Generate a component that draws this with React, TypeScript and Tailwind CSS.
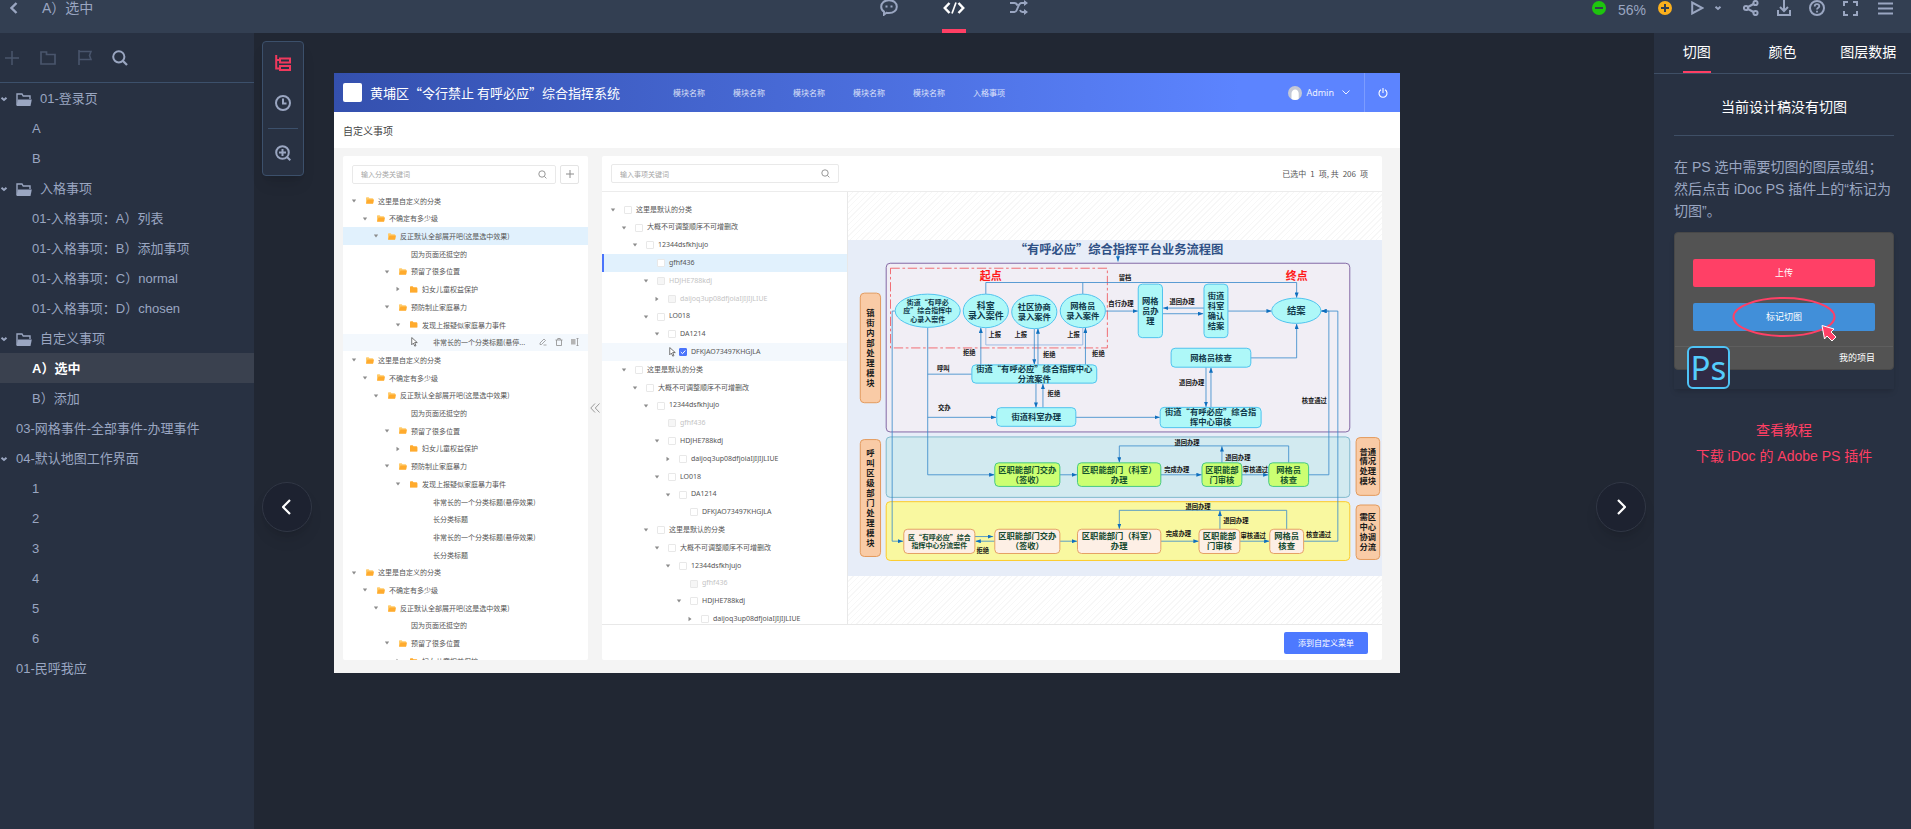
import type { ReactNode } from "react";

type IconProps = { className?: string; children: ReactNode; box?: string };

function Icon({ className = "", children, box = "0 0 16 16" }: IconProps) {
  return (
    <svg viewBox={box} className={`shrink-0 ${className}`} fill="none" stroke="currentColor" strokeWidth={2} aria-hidden="true">
      {children}
    </svg>
  );
}

/* ---------- top bar ---------- */

function TopBar() {
  return (
    <header className="flex h-[33px] shrink-0 items-start bg-[#333f52] text-[#9aa6c1]">
      <div className="flex h-4 flex-1 items-center pl-[10px] text-sm">
        <button type="button" aria-label="返回" className="mr-6 flex">
          <Icon className="h-3 w-2" box="0 0 8 12"><path d="M6.5 1 1.500 6l5 5" strokeWidth={2.4} /></Icon>
        </button>
        <span>A）选中</span>
      </div>
      <nav className="ml-1 flex h-full items-start gap-[41px]">
        <button type="button" aria-label="评论" className="flex h-full w-6 justify-center">
          <Icon className="-mt-px h-[17px] w-[18px]" box="0 0 18 17">
            <path d="M9 1.2c4.500 0 7.800 2.800 7.800 6.500S13.500 14 9 14c-.9 0-1.800 0-2.600-.2L4 15.700v-3C2.200 11.500 1.200 9.800 1.200 7.700 1.200 4 4.500 1.200 9 1.200z" />
            <path d="M5.500 6.500h2v2h-2zM10.500 6.500h2v2h-2z" fill="currentColor" stroke="none" />
          </Icon>
        </button>
        <button type="button" aria-label="标注" className="flex h-full w-6 flex-col items-center justify-between border-b-4 border-[#ff3f64] text-white">
          <Icon className="mt-[2px] h-3 w-[22px]" box="0 0 22 12">
            <path d="M6.500 1 1.800 6l4.700 5M15.500 1l4.700 5-4.700 5" strokeWidth={2.500} />
            <path d="M13 .5 9 11.500" strokeWidth={1.700} />
          </Icon>
        </button>
        <button type="button" aria-label="流程" className="flex h-full w-6 justify-center">
          <Icon className="h-[15px] w-[18px]" box="0 0 18 15">
            <path d="M0 3h4.500c1.500 0 2.200.8 3 2.500M0 12h4.500c3.500 0 3-9 7-9H15M10 10c.5 1.300 1 2 2.300 2H15" />
            <path d="M14 0v6l4-3zM14 9v6l4-3z" fill="currentColor" stroke="none" />
          </Icon>
        </button>
      </nav>
      <div className="flex h-4 flex-1 items-center justify-end pr-[18px]">
        <button type="button" aria-label="缩小" className="mr-3 flex h-[14px] w-[14px] items-center justify-center rounded-full bg-[#1ec40e] text-[#333f52]">
          <Icon className="h-2 w-2" box="0 0 8 8"><path d="M0 4h8" /></Icon>
        </button>
        <span className="mr-3 w-7 pt-1 text-sm leading-4">56%</span>
        <button type="button" aria-label="放大" className="mr-[19px] flex h-[14px] w-[14px] items-center justify-center rounded-full bg-[#fbb01d] text-[#333f52]">
          <Icon className="h-2 w-2" box="0 0 8 8"><path d="M0 4h8M4 0v8" /></Icon>
        </button>
        <button type="button" aria-label="播放" className="mr-[10px] flex">
          <Icon className="h-[14px] w-[13px]" box="0 0 13 14"><path d="M1.200 1.500v11L11.500 7z" /></Icon>
        </button>
        <button type="button" aria-label="播放选项" className="mr-[21px] flex">
          <Icon className="h-[5px] w-2" box="0 0 8 5"><path d="m1.500.8 2.500 2.200L6.500.8" /></Icon>
        </button>
        <button type="button" aria-label="分享" className="mr-[18px] flex">
          <Icon className="h-4 w-4">
            <circle cx="3" cy="8" r="2.100" /><circle cx="12.500" cy="3" r="2.100" /><circle cx="12.500" cy="13" r="2.100" />
            <path d="m5 7 5.500-3M5 9l5.500 3" />
          </Icon>
        </button>
        <button type="button" aria-label="下载" className="mr-[18px] flex">
          <Icon className="h-4 w-[14px]" box="0 0 14 16"><path d="M1 10v5h12v-5M7 0v10.500M3 7l4 4 4-4" /></Icon>
        </button>
        <button type="button" aria-label="帮助" className="mr-[18px] flex">
          <Icon className="h-4 w-4">
            <circle cx="8" cy="8" r="7" />
            <path d="M5.700 6.500C5.700 5 6.600 4.200 8 4.200s2.300.8 2.300 2C10.300 7.700 8 7.800 8 9.500M8 10.700v1.800" strokeWidth={1.800} />
          </Icon>
        </button>
        <button type="button" aria-label="全屏" className="mr-5 flex">
          <Icon className="h-[15px] w-[15px]" box="0 0 15 15"><path d="M1 5V1h4M10 1h4v4M14 10v4h-4M5 14H1v-4" /></Icon>
        </button>
        <button type="button" aria-label="菜单" className="flex">
          <Icon className="h-[13px] w-[15px]" box="0 0 15 13"><path d="M0 1.500h15M0 6.500h15M0 11.500h15" /></Icon>
        </button>
      </div>
    </header>
  );
}

/* ---------- page list ---------- */

type PageRow = { label: string; kind: "folder" | "open" | "root" | "child"; active?: boolean };

const pages: PageRow[] = [
  { label: "01-登录页", kind: "folder" },
  { label: "A", kind: "child" },
  { label: "B", kind: "child" },
  { label: "入格事项", kind: "folder" },
  { label: "01-入格事项：A）列表", kind: "child" },
  { label: "01-入格事项：B）添加事项", kind: "child" },
  { label: "01-入格事项：C）normal", kind: "child" },
  { label: "01-入格事项：D）chosen", kind: "child" },
  { label: "自定义事项", kind: "folder" },
  { label: "A）选中", kind: "child", active: true },
  { label: "B）添加", kind: "child" },
  { label: "03-网格事件-全部事件-办理事件", kind: "root" },
  { label: "04-默认地图工作界面", kind: "open" },
  { label: "1", kind: "child" },
  { label: "2", kind: "child" },
  { label: "3", kind: "child" },
  { label: "4", kind: "child" },
  { label: "5", kind: "child" },
  { label: "6", kind: "child" },
  { label: "01-民呼我应", kind: "root" },
];

function Sidebar() {
  return (
    <aside className="w-[254px] shrink-0 bg-[#283142] text-[13px] text-[#9aa6c1]">
      <div className="flex h-[50px] items-center border-b border-[#3c506b] pl-[5px] text-[#49556c]">
        <button type="button" aria-label="新建" className="mr-[21px] flex">
          <Icon className="h-[14px] w-[14px]" box="0 0 14 14"><path d="M0 7h14M7 0v14" strokeWidth={1.500} /></Icon>
        </button>
        <button type="button" aria-label="新建文件夹" className="mr-[22px] flex">
          <Icon className="h-[14px] w-4" box="0 0 16 14"><path d="M1 1h5.500v2.500H15V13H1z" strokeWidth={1.700} /></Icon>
        </button>
        <button type="button" aria-label="标记" className="mr-5 flex">
          <Icon className="h-[15px] w-[14px]" box="0 0 14 15"><path d="M1 0v15M1 1.500h12L11.500 5.500 13 9.500H1" strokeWidth={1.600} /></Icon>
        </button>
        <button type="button" aria-label="搜索" className="flex text-[#9aa6c1]">
          <Icon className="h-4 w-4"><circle cx="6.800" cy="6.800" r="5.600" /><path d="m11 11 4 4" strokeWidth={2.300} /></Icon>
        </button>
      </div>
      <ul>
        {pages.map((p, i) => (
          <li key={i} className={p.active ? "bg-[#3a414f] font-bold text-white" : ""}>
            <a href="#" className="flex h-[30px] items-center pt-[2px]">
              <span className="flex w-4 shrink-0">
                {(p.kind === "folder" || p.kind === "open") && (
                  <Icon className="h-[5px] w-2" box="0 0 8 5"><path d="m1.500.8 2.500 2.200L6.500.8" /></Icon>
                )}
              </span>
              {p.kind === "folder" && (
                <Icon className="mr-2 h-[13px] w-4" box="0 0 16 13">
                  <path d="M1 12V1h5l1.200 2H14v3" strokeWidth={1.400} />
                  <path d="M1.800 6.500h14L14.500 13H.5z" fill="currentColor" stroke="none" />
                </Icon>
              )}
              <span className={p.kind === "child" ? "pl-4" : ""}>{p.label}</span>
            </a>
          </li>
        ))}
      </ul>
    </aside>
  );
}

/* ---------- design canvas: trees ---------- */

type Node = { level: number; label: string; arrow?: "down" | "right"; folder?: "open" | "closed"; state?: "selected" | "hover"; disabled?: boolean };

const categoryBlock = (leaves: Node[], selected: boolean): Node[] => [
  { level: 0, label: "这里是自定义的分类", arrow: "down", folder: "open" },
  { level: 1, label: "不确定有多少级", arrow: "down", folder: "open" },
  { level: 2, label: "反正默认全部展开吧(这是选中效果)", arrow: "down", folder: "open", state: selected ? "selected" : undefined },
  { level: 3, label: "因为页面还挺空的" },
  { level: 3, label: "预留了很多位置", arrow: "down", folder: "open" },
  { level: 4, label: "妇女儿童权益保护", arrow: "right", folder: "closed" },
  { level: 3, label: "预防制止家庭暴力", arrow: "down", folder: "open" },
  { level: 4, label: "发现上报疑似家庭暴力事件", arrow: "down", folder: "closed" },
  ...leaves,
];

const categories: Node[] = [
  ...categoryBlock([{ level: 5, label: "非常长的一个分类标题(悬停...", state: "hover" }], true),
  ...categoryBlock(
    [
      { level: 5, label: "非常长的一个分类标题(悬停效果)" },
      { level: 5, label: "长分类标题" },
      { level: 5, label: "非常长的一个分类标题(悬停效果)" },
      { level: 5, label: "长分类标题" },
    ],
    false,
  ),
  ...categoryBlock([], false).slice(0, 6),
];

const itemBlock = (base: number, first: boolean): Node[] => {
  const inner = base + 3;
  return [
    { level: base, label: "这里是默认的分类", arrow: "down" },
    { level: base + 1, label: "大概不可调整顺序不可增删改", arrow: "down" },
    { level: base + 2, label: "12344dsfkhjujo", arrow: "down" },
    { level: inner, label: "gfhf436", state: first ? "selected" : undefined, disabled: !first },
    { level: inner, label: "HDJHE788kdj", arrow: "down", disabled: first },
    { level: inner + 1, label: "daijoq3up08dfjoiaIJIJIJLIUE", arrow: "right", disabled: first },
    { level: inner, label: "LO018", arrow: "down" },
    { level: inner + 1, label: "DA1214", arrow: "down" },
    { level: inner + 2, label: "DFKJAO73497KHGJLA", state: first ? "hover" : undefined },
  ];
};

const items: Node[] = [...itemBlock(0, true), ...itemBlock(1, false), ...itemBlock(3, false).slice(0, 6)];

const INDENT = 11;

function Arrow({ dir }: { dir?: "down" | "right" }) {
  return (
    <svg viewBox="0 0 6 6" className="h-[6px] w-[6px] shrink-0 text-[#8c8c8c]" fill="currentColor" aria-hidden="true">
      {dir === "down" && <path d="M.8 1.500h4.400L3 4.500z" />}
      {dir === "right" && <path d="M1.500.8v4.400l3-2.200z" />}
    </svg>
  );
}

function Pointer() {
  return (
    <svg viewBox="0 0 12 18" className="h-[10px] w-[7px]" fill="#fff" stroke="#444" strokeWidth={1.300} aria-hidden="true">
      <path d="M1 1v13l3-3 2.500 5.500 2.200-1L6.300 10H11z" />
    </svg>
  );
}

function Magnifier() {
  return (
    <svg viewBox="0 0 9 9" className="h-[9px] w-[9px] shrink-0 text-[#8c8c8c]" fill="none" stroke="currentColor" aria-hidden="true">
      <circle cx="4" cy="4" r="3.200" strokeWidth={0.900} />
      <path d="m6.400 6.400 2 2" strokeWidth={0.900} />
    </svg>
  );
}

function SearchBox({ label }: { label: string }) {
  return (
    <label className="flex h-[19px] min-w-0 flex-1 items-center rounded-xs border border-[#e9e9e9] pr-2 pl-2">
      <input aria-label={label} placeholder={label} className="h-full min-w-0 flex-1 bg-transparent text-[7px] outline-none placeholder:text-[#a6a6a6]" />
      <Magnifier />
    </label>
  );
}

function rowTone(state?: "selected" | "hover") {
  if (state === "selected") return "bg-[#e1f1fd]";
  if (state === "hover") return "bg-[#f3f8fd]";
  return "";
}

function CategoryTree() {
  return (
    <section className="flex w-[245px] shrink-0 flex-col overflow-hidden rounded-xs bg-white">
      <div className="flex h-9 shrink-0 items-center gap-1 px-[9px]">
        <SearchBox label="输入分类关键词" />
        <button type="button" aria-label="新增分类" className="flex h-[19px] w-[19px] items-center justify-center rounded-xs border border-[#e4e4e4] text-[#8c8c8c]">
          <svg viewBox="0 0 8 8" className="h-2 w-2" stroke="currentColor" aria-hidden="true"><path d="M0 4h8M4 0v8" /></svg>
        </button>
      </div>
      <ul className="flex h-[478px] shrink-0 flex-col">
        {categories.map((n, i) => (
          <li key={i} className={`relative flex flex-1 items-center pr-[9px] ${rowTone(n.state)}`} style={{ paddingLeft: 8 + n.level * INDENT }}>
            <Arrow dir={n.arrow} />
            <span className="mr-1 ml-[9px] flex h-2 w-2 items-center">
              {n.folder && (
                <svg viewBox="0 0 16 13" className="h-[7px] w-2" aria-hidden="true">
                  <path d="M0 1.500C0 .7.600 0 1.400 0h4l1.500 2H13c.8 0 1.500.7 1.500 1.500V12H0z" fill={n.folder === "open" ? "#ffcb6b" : "#ffab2e"} />
                  <path d={n.folder === "open" ? "M3 4.500h13L14 13H0z" : "M0 4h14.500v8.500H0z"} fill="#ffab2e" />
                </svg>
              )}
            </span>
            <span className="whitespace-nowrap">{n.label}</span>
            {n.state === "hover" && (
              <>
                <span className="absolute left-[68px]"><Pointer /></span>
                <span className="ml-auto flex items-center gap-2 text-[#8c8c8c]">
                  <button type="button" aria-label="编辑" className="flex">
                    <Icon className="h-2 w-2"><path d="M2 10 10 2l3 3-8 8H2zM9 14h6" strokeWidth={1.500} /></Icon>
                  </button>
                  <button type="button" aria-label="删除" className="flex">
                    <Icon className="h-2 w-2"><path d="M1 4h14M3 4v11h10V4M5.500 4V1h5v3" strokeWidth={1.600} /></Icon>
                  </button>
                  <button type="button" aria-label="移动" className="flex">
                    <Icon className="h-2 w-2"><path d="M0 2h9v11H0z" fill="#b5b5b5" stroke="none" /><path d="M11 1h4M11 15h4M13 1v14" strokeWidth={1.500} /></Icon>
                  </button>
                </span>
              </>
            )}
          </li>
        ))}
      </ul>
    </section>
  );
}

function ItemTree() {
  return (
    <div className="w-[246px] shrink-0 overflow-hidden border-r border-[#e8e8e8] pt-[9px] font-['Noto_Sans','Noto_Sans_CJK_SC',sans-serif]">
      <ul className="flex h-[427px] flex-col">
        {items.map((n, i) => (
          <li
            key={i}
            className={`relative flex flex-1 items-center ${rowTone(n.state)} ${n.disabled ? "text-[#c4c4c4]" : ""}`}
            style={{ paddingLeft: 8 + n.level * INDENT }}
          >
            {n.state === "selected" && <span className="absolute inset-y-0 left-0 w-[2px] bg-[#4a74fb]" />}
            {n.state === "hover" && <span className="absolute left-[67px] z-10"><Pointer /></span>}
            <Arrow dir={n.arrow} />
            <label className="ml-2 flex items-center gap-1 whitespace-nowrap">
              <span className="relative flex h-2 w-2">
                <input
                  type="checkbox"
                  defaultChecked={n.state === "hover"}
                  disabled={n.disabled}
                  className="h-2 w-2 appearance-none rounded-[1px] border border-[#e8e8e8] bg-white checked:border-[#4a74fb] checked:bg-[#4a74fb] disabled:bg-[#f6f6f6]"
                />
                {n.state === "hover" && (
                  <svg viewBox="0 0 8 8" className="pointer-events-none absolute inset-0 h-2 w-2" fill="none" stroke="#fff" aria-hidden="true"><path d="m1.800 4 1.700 1.700 2.800-3.200" /></svg>
                )}
              </span>
              {n.label}
            </label>
          </li>
        ))}
      </ul>
    </div>
  );
}

/* ---------- design canvas: flow chart ---------- */

type Shape = { x: number; y: number; w: number; h: number; lines: string[]; size?: number; tone: keyof typeof tones; gap?: number; round?: boolean };

const tones = {
  cyan: { fill: "#aef8f8", stroke: "#4fc3ee", text: "#10384a" },
  green: { fill: "#ccff72", stroke: "#45c888", text: "#14532d" },
  pink: { fill: "#fdefe5", stroke: "#e5a164", text: "#14492f" },
  orange: { fill: "#f9cba6", stroke: "#e39a5c", text: "#1b1b1b" },
};

const shapes: Shape[] = [
  { x: 58, y: 157, w: 61, h: 330, lines: [..."镇街内部处理模块"], tone: "orange" },
  { x: 58, y: 598, w: 61, h: 352, lines: [..."呼叫区级部门处理模块"], tone: "orange" },
  { x: 1551, y: 592, w: 71, h: 174, lines: ["普通", "情况", "处理", "模块"], tone: "orange" },
  { x: 1551, y: 795, w: 71, h: 164, lines: ["需区", "中心", "协调", "分流"], tone: "orange" },
  { x: 163, y: 160, w: 196, h: 100, lines: ["街道“有呼必", "应”综合指挥中", "心录入案件"], size: 21, gap: 25, tone: "cyan", round: true },
  { x: 368, y: 160, w: 136, h: 101, lines: ["科室", "录入案件"], size: 27, tone: "cyan", round: true },
  { x: 514, y: 163, w: 136, h: 101, lines: ["社区协商", "录入案件"], tone: "cyan", round: true },
  { x: 660, y: 160, w: 136, h: 101, lines: ["网格员", "录入案件"], tone: "cyan", round: true },
  { x: 1297, y: 172, w: 148, h: 76, lines: ["结案"], size: 28, tone: "cyan", round: true },
  { x: 895, y: 130, w: 73, h: 161, lines: ["网格", "员办", "理"], tone: "cyan" },
  { x: 1093, y: 130, w: 72, h: 161, lines: ["街道", "科室", "确认", "结案"], tone: "cyan" },
  { x: 994, y: 323, w: 240, h: 57, lines: ["网格员核查"], tone: "cyan" },
  { x: 394, y: 373, w: 376, h: 55, lines: ["街道“有呼必应”综合指挥中心", "分流案件"], tone: "cyan" },
  { x: 469, y: 502, w: 238, h: 56, lines: ["街道科室办理"], tone: "cyan" },
  { x: 961, y: 501, w: 304, h: 61, lines: ["街道“有呼必应”综合指", "挥中心审核"], tone: "cyan" },
  { x: 463, y: 668, w: 196, h: 71, lines: ["区职能部门交办", "（签收）"], tone: "green" },
  { x: 712, y: 668, w: 251, h: 71, lines: ["区职能部门（科室）", "办理"], tone: "green" },
  { x: 1087, y: 668, w: 120, h: 71, lines: ["区职能部", "门审核"], tone: "green" },
  { x: 1288, y: 668, w: 120, h: 71, lines: ["网格员", "核查"], tone: "green" },
  { x: 189, y: 868, w: 214, h: 73, lines: ["区“有呼必应”综合", "指挥中心分流案件"], size: 21, gap: 26, tone: "pink" },
  { x: 463, y: 868, w: 196, h: 73, lines: ["区职能部门交办", "（签收）"], tone: "pink" },
  { x: 712, y: 868, w: 251, h: 73, lines: ["区职能部门（科室）", "办理"], tone: "pink" },
  { x: 1078, y: 868, w: 123, h: 73, lines: ["区职能部", "门审核"], tone: "pink" },
  { x: 1291, y: 868, w: 102, h: 73, lines: ["网格员", "核查"], tone: "pink" },
];

const arrows = [
  "M834 40V62", "M436 160V125H1372V171", "M796 211H894", "M1093 202H970", "M968 219H1091", "M1165 211H1297",
  "M1234 352H1372V249", "M1408 704H1469V211H1446", "M1393 904H1496V211H1446", "M261 260V704H462", "M261 531H467",
  "M162 211H154V904H187", "M421 373V261", "M582 263V372", "M593 373V263", "M736 373V261", "M587 428V502",
  "M608 502V430", "M707 531H960", "M1099 380V500", "M1114 500V381", "M659 704H711", "M963 704H1086", "M1207 704H1287",
  "M1147 668V618", "M1348 668V617H838V667", "M403 890H458", "M463 904H405", "M659 904H711", "M963 904H1077",
  "M1201 904H1290", "M1141 868V812", "M1342 868V811H838V867",
];

const notes: [number, number, string][] = [
  [855, 111, "留档"], [843, 188, "自行办理"], [1027, 182, "退回办理"], [463, 283, "上报"], [541, 283, "上报"], [700, 283, "上报"],
  [386, 337, "拒绝"], [627, 342, "拒绝"], [775, 338, "拒绝"], [308, 384, "呼叫"], [311, 503, "交办"], [641, 461, "拒绝"],
  [1056, 428, "退回办理"], [1425, 480, "核查通过"], [1042, 607, "退回办理"], [1195, 652, "退回办理"], [1011, 688, "完成办理"],
  [1248, 688, "审核通过"], [1075, 799, "退回办理"], [1189, 843, "退回办理"], [1016, 882, "完成办理"], [1241, 887, "审核通过"],
  [1438, 883, "核查通过"], [427, 932, "拒绝"],
];

function FlowChart() {
  return (
    <svg viewBox="21 -3 1608 1014" className="h-auto w-full bg-[#e7edf8]" textAnchor="middle" role="img" aria-label="综合指挥平台业务流程图">
      <defs>
        <marker id="tip" viewBox="0 0 10 10" refX="10" refY="5" markerWidth="16" markerHeight="12" markerUnits="userSpaceOnUse" orient="auto" preserveAspectRatio="none">
          <path d="M0 0 10 5 0 10z" fill="#0f6fbe" />
        </marker>
      </defs>
      <text x="837" y="39" fontSize="37" fontWeight="700" fill="#2f5186">“有呼必应”综合指挥平台业务流程图</text>
      <g strokeWidth="3">
        <rect x="136" y="67" width="1396" height="508" rx="12" fill="#f1eef5" stroke="#8468a5" />
        <rect x="136" y="590" width="1396" height="182" rx="12" fill="#d2eaf0" stroke="#7fb9cd" />
        <rect x="136" y="785" width="1396" height="177" rx="12" fill="#f9f8a0" stroke="#fccb2a" />
      </g>
      <rect x="149" y="82" width="653" height="240" fill="none" stroke="#f0535a" strokeWidth="2.500" strokeDasharray="28 8 8 8" />
      <path d="M436 260V313H728V260" fill="none" stroke="#8fb2e0" strokeWidth="2.500" />
      <g fill="none" stroke="#3a8bcb" strokeWidth="2.500">
        <path d="M728 125V160M394 401H261" />
        {arrows.map((d) => <path key={d} d={d} markerEnd="url(#tip)" />)}
      </g>
      {shapes.map((s, i) => {
        const t = tones[s.tone];
        const size = s.size ?? 25;
        const gap = s.gap ?? 30;
        const cx = s.x + s.w / 2;
        const top = s.y + s.h / 2 - ((s.lines.length - 1) * gap) / 2 + size * 0.36;
        return (
          <g key={i}>
            <rect x={s.x} y={s.y} width={s.w} height={s.h} rx={s.round ? s.w / 2 : 12} ry={s.round ? s.h / 2 : 12} fill={t.fill} stroke={t.stroke} strokeWidth="3" />
            <g fontSize={size} fontWeight="700" fill={t.text}>
              {s.lines.map((l, k) => <text key={k} x={cx} y={top + k * gap}>{l}</text>)}
            </g>
          </g>
        );
      })}
      <g fontSize="19" fontWeight="700" fill="#151515">
        {notes.map(([x, y, t], i) => <text key={i} x={x} y={y + 7}>{t}</text>)}
      </g>
      <g fontSize="33" fontWeight="700" fill="#ff1a1a">
        <text x="451" y="117">起点</text>
        <text x="1372" y="117">终点</text>
      </g>
    </svg>
  );
}

/* ---------- design canvas ---------- */

const modules = ["模块名称", "模块名称", "模块名称", "模块名称", "模块名称", "入格事项"];

function DesignCanvas() {
  return (
    <article lang="zh-CN" className="flex h-[600px] flex-col bg-[#f4f4f4] font-['Noto_Sans_CJK_SC',sans-serif] text-[7px] text-[#555]">
      <div className="flex h-[39px] shrink-0 items-center bg-linear-to-r from-[#3450ae] to-[#5c84ff] to-85% pl-[9px] text-white">
        <span className="mr-2 h-[19px] w-[19px] rounded-xs bg-white" />
        <h1 className="w-[303px] text-[13px] whitespace-nowrap">黄埔区“令行禁止 有呼必应”综合指挥系统</h1>
        <nav className="flex gap-7 text-[8px] text-white/80">
          {modules.map((m, i) => <a key={i} href="#" className="w-8 whitespace-nowrap">{m}</a>)}
        </nav>
        <div className="ml-auto flex h-full items-center">
          <svg viewBox="0 0 14 14" className="mr-1 h-[14px] w-[14px]" aria-hidden="true">
            <circle cx="7" cy="7" r="7" fill="#c3c8d6" />
            <path d="M3.500 13V8.500C3.200 5.500 5 3.500 7.200 3.500s3.800 2 3.500 5V13c-2 1.200-5 1.200-7.200 0z" fill="#fff" />
          </svg>
          <span className="font-['Noto_Sans',sans-serif] text-[9px] text-white/90">Admin</span>
          <svg viewBox="0 0 8 5" className="mr-[14px] ml-2 h-[5px] w-2" fill="none" stroke="#fff" aria-hidden="true"><path d="m.5.5 3.500 3.500L7.500.5" strokeWidth={0.900} /></svg>
          <button type="button" aria-label="退出" className="flex h-full w-9 items-center justify-center border-l border-white/20">
            <svg viewBox="0 0 10 10" className="h-[10px] w-[10px]" fill="none" stroke="#fff" aria-hidden="true"><path d="M3 1.800a4 4 0 1 0 4 0M5 0v5" strokeWidth={1.100} /></svg>
          </button>
        </div>
      </div>
      <h2 className="flex h-9 shrink-0 items-center bg-white pl-[9px] text-[10px] text-[#444]">自定义事项</h2>
      <div className="flex min-h-0 flex-1 pt-2 pr-[18px] pb-[13px] pl-[9px]">
        <CategoryTree />
        <button type="button" aria-label="收起" className="flex w-[14px] shrink-0 items-center justify-center text-[#9a9a9a]">
          <svg viewBox="0 0 10 10" className="h-[10px] w-[10px]" fill="none" stroke="currentColor" aria-hidden="true"><path d="M5 .5.800 5 5 9.500M9.500.5 5.300 5l4.200 4.500" /></svg>
        </button>
        <section className="flex min-w-0 flex-1 flex-col rounded-xs bg-white">
          <div className="flex h-9 shrink-0 items-center justify-between border-b border-[#ececec] pr-[14px] pl-[9px]">
            <div className="flex w-[228px]"><SearchBox label="输入事项关键词" /></div>
            <p className="flex gap-1 text-[8px]"><span>已选中</span><span>1</span><span>项, 共</span><span>206</span><span>项</span></p>
          </div>
          <div className="flex min-h-0 flex-1">
            <ItemTree />
            <div className="flex min-w-0 flex-1 items-center bg-[repeating-linear-gradient(135deg,#fff_0px,#fff_3px,#f7f7f7_3px,#f7f7f7_4px)]">
              <FlowChart />
            </div>
          </div>
          <div className="flex h-9 shrink-0 items-center justify-end border-t border-[#e8e8e8] pr-[14px]">
            <button type="button" className="h-[22px] w-[84px] rounded-xs bg-[#4d79ff] text-[8px] text-white">添到自定义菜单</button>
          </div>
        </section>
      </div>
    </article>
  );
}

function Workspace() {
  return (
    <main className="relative min-w-0 flex-1 bg-[#212733] pt-10 pr-[254px] pl-20">
      <DesignCanvas />
      <div className="absolute top-2 left-2 flex w-[42px] flex-col items-center rounded-sm border border-[#3c506b] bg-[#283142] pt-[13px] pb-[14px] text-[#9aa6c1] shadow-lg">
        <button type="button" aria-label="图层" className="mb-6 flex text-[#f0395d]">
          <Icon className="h-4 w-4"><path d="M1.200 0v13.500H5M1.200 5H5M5 3.500h10v4H5zM5 11h10v4H5z" strokeWidth={2} /></Icon>
        </button>
        <button type="button" aria-label="历史" className="mb-[17px] flex">
          <Icon className="h-4 w-4"><circle cx="8" cy="8" r="7" /><path d="M8 3.500v5h3.500" /></Icon>
        </button>
        <hr className="mb-4 w-[30px] border-[#3c506b]" />
        <button type="button" aria-label="放大查看" className="flex">
          <Icon className="h-4 w-4"><circle cx="7.500" cy="7.500" r="6.300" /><path d="m12 12 3.300 3.300M4 7.500h7M7.500 4v7" /></Icon>
        </button>
      </div>
      <button type="button" aria-label="上一页" className="absolute top-[449px] left-2 flex h-[50px] w-[50px] items-center justify-center rounded-full border border-[#313745] bg-[#1d2230] text-white shadow-lg">
        <Icon className="h-4 w-[10px]" box="0 0 10 16"><path d="M8 1 1 8l7 7" strokeWidth={2.200} /></Icon>
      </button>
      <button type="button" aria-label="下一页" className="absolute top-[449px] right-2 flex h-[50px] w-[50px] items-center justify-center rounded-full border border-[#313745] bg-[#1d2230] text-white shadow-lg">
        <Icon className="h-4 w-[10px]" box="0 0 10 16"><path d="m2 1 7 7-7 7" strokeWidth={2.200} /></Icon>
      </button>
    </main>
  );
}

/* ---------- inspector ---------- */

function Inspector() {
  return (
    <aside className="w-[257px] shrink-0 bg-[#283142] text-sm text-[#9aa6c1]">
      <div className="grid h-[41px] grid-cols-3 justify-items-center border-b border-[#3f4f66] text-white">
        <button type="button" className="border-b-2 border-[#ff3f64]">切图</button>
        <button type="button" className="border-b-2 border-transparent">颜色</button>
        <button type="button" className="border-b-2 border-transparent">图层数据</button>
      </div>
      <div className="pr-[17px] pl-5">
        <p className="flex h-[62px] items-center justify-center border-b border-[#3f4f66] pt-[5px] text-white">当前设计稿没有切图</p>
        <p className="mt-5 leading-[22px]">
          在 PS 选中需要切图的图层或组；
          <br />
          然后点击 iDoc PS 插件上的“标记为切图”。
        </p>
        <div className="relative mt-[10px] h-[157px] shadow-md">
          <div className="flex h-[138px] flex-col rounded border border-[#484848] bg-[#535353] text-[9px] text-white">
            <div className="flex flex-1 flex-col gap-4 px-[18px] pt-[26px]">
              <div className="flex h-7 items-center justify-center rounded-xs bg-[#ff4066]">上传</div>
              <div className="flex h-7 items-center justify-center rounded-xs bg-[#418fd9]">标记切图</div>
            </div>
            <div className="flex h-[23px] items-center justify-end border-t border-[#5e5e5e] pr-[18px]">我的项目</div>
          </div>
          <svg viewBox="0 0 104 46" className="absolute top-[65px] left-[58px] h-[46px] w-[104px]" aria-hidden="true">
            <ellipse cx="52" cy="20" rx="50.500" ry="19" fill="none" stroke="#ff4066" strokeWidth="2" />
            <path d="M90 28.500 102 32l-3 3 5 5-4 4-5-5-2.500 3z" fill="#ff4066" stroke="#fff" />
          </svg>
          <div className="absolute bottom-0 left-[13px] flex h-[43px] w-[43px] items-center justify-center rounded-md border-2 border-[#4ec3f5] bg-[#302a45] font-['Noto_Sans'] text-[33px] leading-none text-[#55cdfc]">
            Ps
          </div>
        </div>
        <div className="mt-7 flex flex-col items-center text-[#ff3f64]">
          <a href="#" className="leading-[26px]">查看教程</a>
          <a href="#" className="leading-[26px]">下载 iDoc 的 Adobe PS 插件</a>
        </div>
      </div>
    </aside>
  );
}

export default function App() {
  return (
    <div className="flex min-h-screen flex-col bg-[#212733] font-['Liberation_Sans','Noto_Sans_CJK_SC',sans-serif]">
      <TopBar />
      <div className="flex flex-1">
        <Sidebar />
        <Workspace />
        <Inspector />
      </div>
    </div>
  );
}
